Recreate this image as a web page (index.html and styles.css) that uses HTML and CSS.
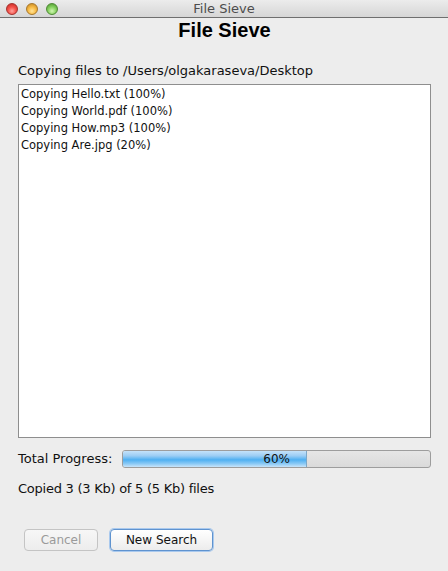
FILE: index.html
```html
<!DOCTYPE html>
<html>
<head>
<meta charset="utf-8">
<title>File Sieve</title>
<link rel="stylesheet" href="styles.css">
</head>
<body>
<div class="window">
  <div class="titlebar">
    <div class="lights">
      <span class="light red"></span>
      <span class="light yellow"></span>
      <span class="light green"></span>
    </div>
    <div class="wtitle">File Sieve</div>
  </div>
  <div class="content">
    <h1 class="heading">File Sieve</h1>
    <div class="label dest">Copying files to /Users/olgakaraseva/Desktop</div>
    <div class="log">
      <div class="row">Copying Hello.txt (100%)</div>
      <div class="row">Copying World.pdf (100%)</div>
      <div class="row">Copying How.mp3 (100%)</div>
      <div class="row">Copying Are.jpg (20%)</div>
    </div>
    <div class="progress-row">
      <span class="label">Total Progress:</span>
      <div class="bar">
        <div class="fill" style="width:60%"></div>
        <span class="pct">60%</span>
      </div>
    </div>
    <div class="label summary">Copied 3 (3 Kb) of 5 (5 Kb) files</div>
    <div class="buttons">
      <button class="btn disabled">Cancel</button>
      <button class="btn default">New Search</button>
    </div>
  </div>
</div>
</body>
</html>
```
FILE: styles.css
```css
html, body {
  margin: 0;
  padding: 0;
}
body {
  width: 448px;
  height: 571px;
  background: #ededed;
  font-family: "DejaVu Sans", "Liberation Sans", sans-serif;
  font-size: 13px;
  color: #111;
  overflow: hidden;
}
.window {
  display: flex;
  flex-direction: column;
  height: 571px;
}
.titlebar {
  position: relative;
  height: 17px;
  border-bottom: 1px solid #6f6f6f;
  background: linear-gradient(#ececec, #d6d6d6);
  display: flex;
  align-items: center;
}
.lights {
  display: flex;
  gap: 8px;
  padding-left: 6px;
}
.light {
  width: 12px;
  height: 12px;
  border-radius: 50%;
  box-sizing: border-box;
}
.red {
  background: radial-gradient(circle at 50% 70%, #ffa49e 0%, #f5524a 45%, #c0241f 100%);
  border: 1px solid #a5302c;
}
.yellow {
  background: radial-gradient(circle at 50% 70%, #ffe49a 0%, #f8bb44 45%, #bf8220 100%);
  border: 1px solid #a8772a;
}
.green {
  background: radial-gradient(circle at 50% 70%, #d2f5b4 0%, #88d362 45%, #469329 100%);
  border: 1px solid #4f8a35;
}
.wtitle {
  position: absolute;
  left: 0;
  right: 0;
  top: 0;
  text-align: center;
  line-height: 17px;
  font-size: 13px;
  color: #4d4d4d;
}
.content {
  display: flex;
  flex-direction: column;
  padding: 0 17px 0 18px;
}
.heading {
  margin: 0;
  text-align: center;
  font-family: "Liberation Sans", Arial, sans-serif;
  font-weight: bold;
  font-size: 20px;
  line-height: 24px;
  color: #000;
}
.label {
  line-height: 16px;
}
.dest {
  margin-top: 21px;
}
.log {
  margin-top: 5px;
  background: #fff;
  border: 1px solid #8e8e8e;
  padding: 1px 2px;
  height: 350px;
  font-size: 11.5px;
}
.row {
  line-height: 17px;
}
.progress-row {
  margin-top: 12px;
  display: flex;
  align-items: center;
  gap: 10px;
}
.bar {
  position: relative;
  flex: 1;
  height: 16px;
  border: 1px solid #9d9d9d;
  border-radius: 3px;
  background: linear-gradient(#e6e6e6, #dadada);
  overflow: hidden;
}
.fill {
  height: 100%;
  background: linear-gradient(#c4e2fa 0%, #9ccdf4 30%, #4fb0f2 55%, #8ccaf5 80%, #c9e5fa 100%);
  border-right: 1px solid #7da8c8;
  box-sizing: border-box;
}
.pct {
  position: absolute;
  left: 0;
  right: 0;
  top: 0;
  text-align: center;
  line-height: 16px;
  font-size: 12px;
  color: #111;
}
.summary {
  margin-top: 13px;
  letter-spacing: -0.25px;
}
.buttons {
  margin-top: 32px;
  display: flex;
  gap: 12px;
  padding-left: 6px;
}
.btn {
  height: 22px;
  padding: 0;
  font-family: "DejaVu Sans", sans-serif;
  font-size: 12px;
  border-radius: 4px;
  background: linear-gradient(#ffffff, #ececec);
}
.btn.disabled {
  width: 74px;
  color: #9a9a9a;
  border: 1px solid #c4c4c4;
  background: linear-gradient(#f7f7f7, #ededed);
}
.btn.default {
  width: 103px;
  color: #111;
  border: 1px solid #5f93cf;
  box-shadow: 0 0 0 1px #a9c9ee;
}
```
